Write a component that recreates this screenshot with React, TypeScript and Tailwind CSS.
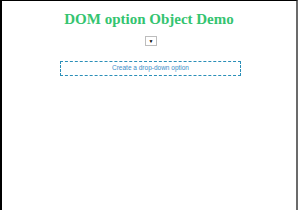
export default function App() {
  return (
    <div className="w-[300px] h-[210px] bg-white overflow-hidden">
      <div className="w-[298px] h-[210px] border-l-2 border-t border-black border-r-2 border-r-[#6b6b6b] flex flex-col items-center">
        <h1
          className="mt-[8px] text-[15px] leading-[20px] font-bold text-[#34c470]"
          style={{ fontFamily: '"Liberation Serif", "Times New Roman", serif' }}
        >
          DOM option Object Demo
        </h1>
        <div className="mt-[7px] ml-[4px] w-[12px] h-[10px] border border-[#bdbdbd] bg-white flex items-center justify-center">
          <span className="text-[5px] leading-none text-black">▼</span>
        </div>
        <button
          className="mt-[15px] ml-[3px] w-[181px] h-[15px] border border-dashed border-[#2b8fb8] text-[6.5px] leading-none text-[#3b8ec9] flex items-center justify-center"
          style={{ fontFamily: '"Liberation Sans", Arial, sans-serif' }}
        >
          Create a drop-down option
        </button>
      </div>
    </div>
  );
}
